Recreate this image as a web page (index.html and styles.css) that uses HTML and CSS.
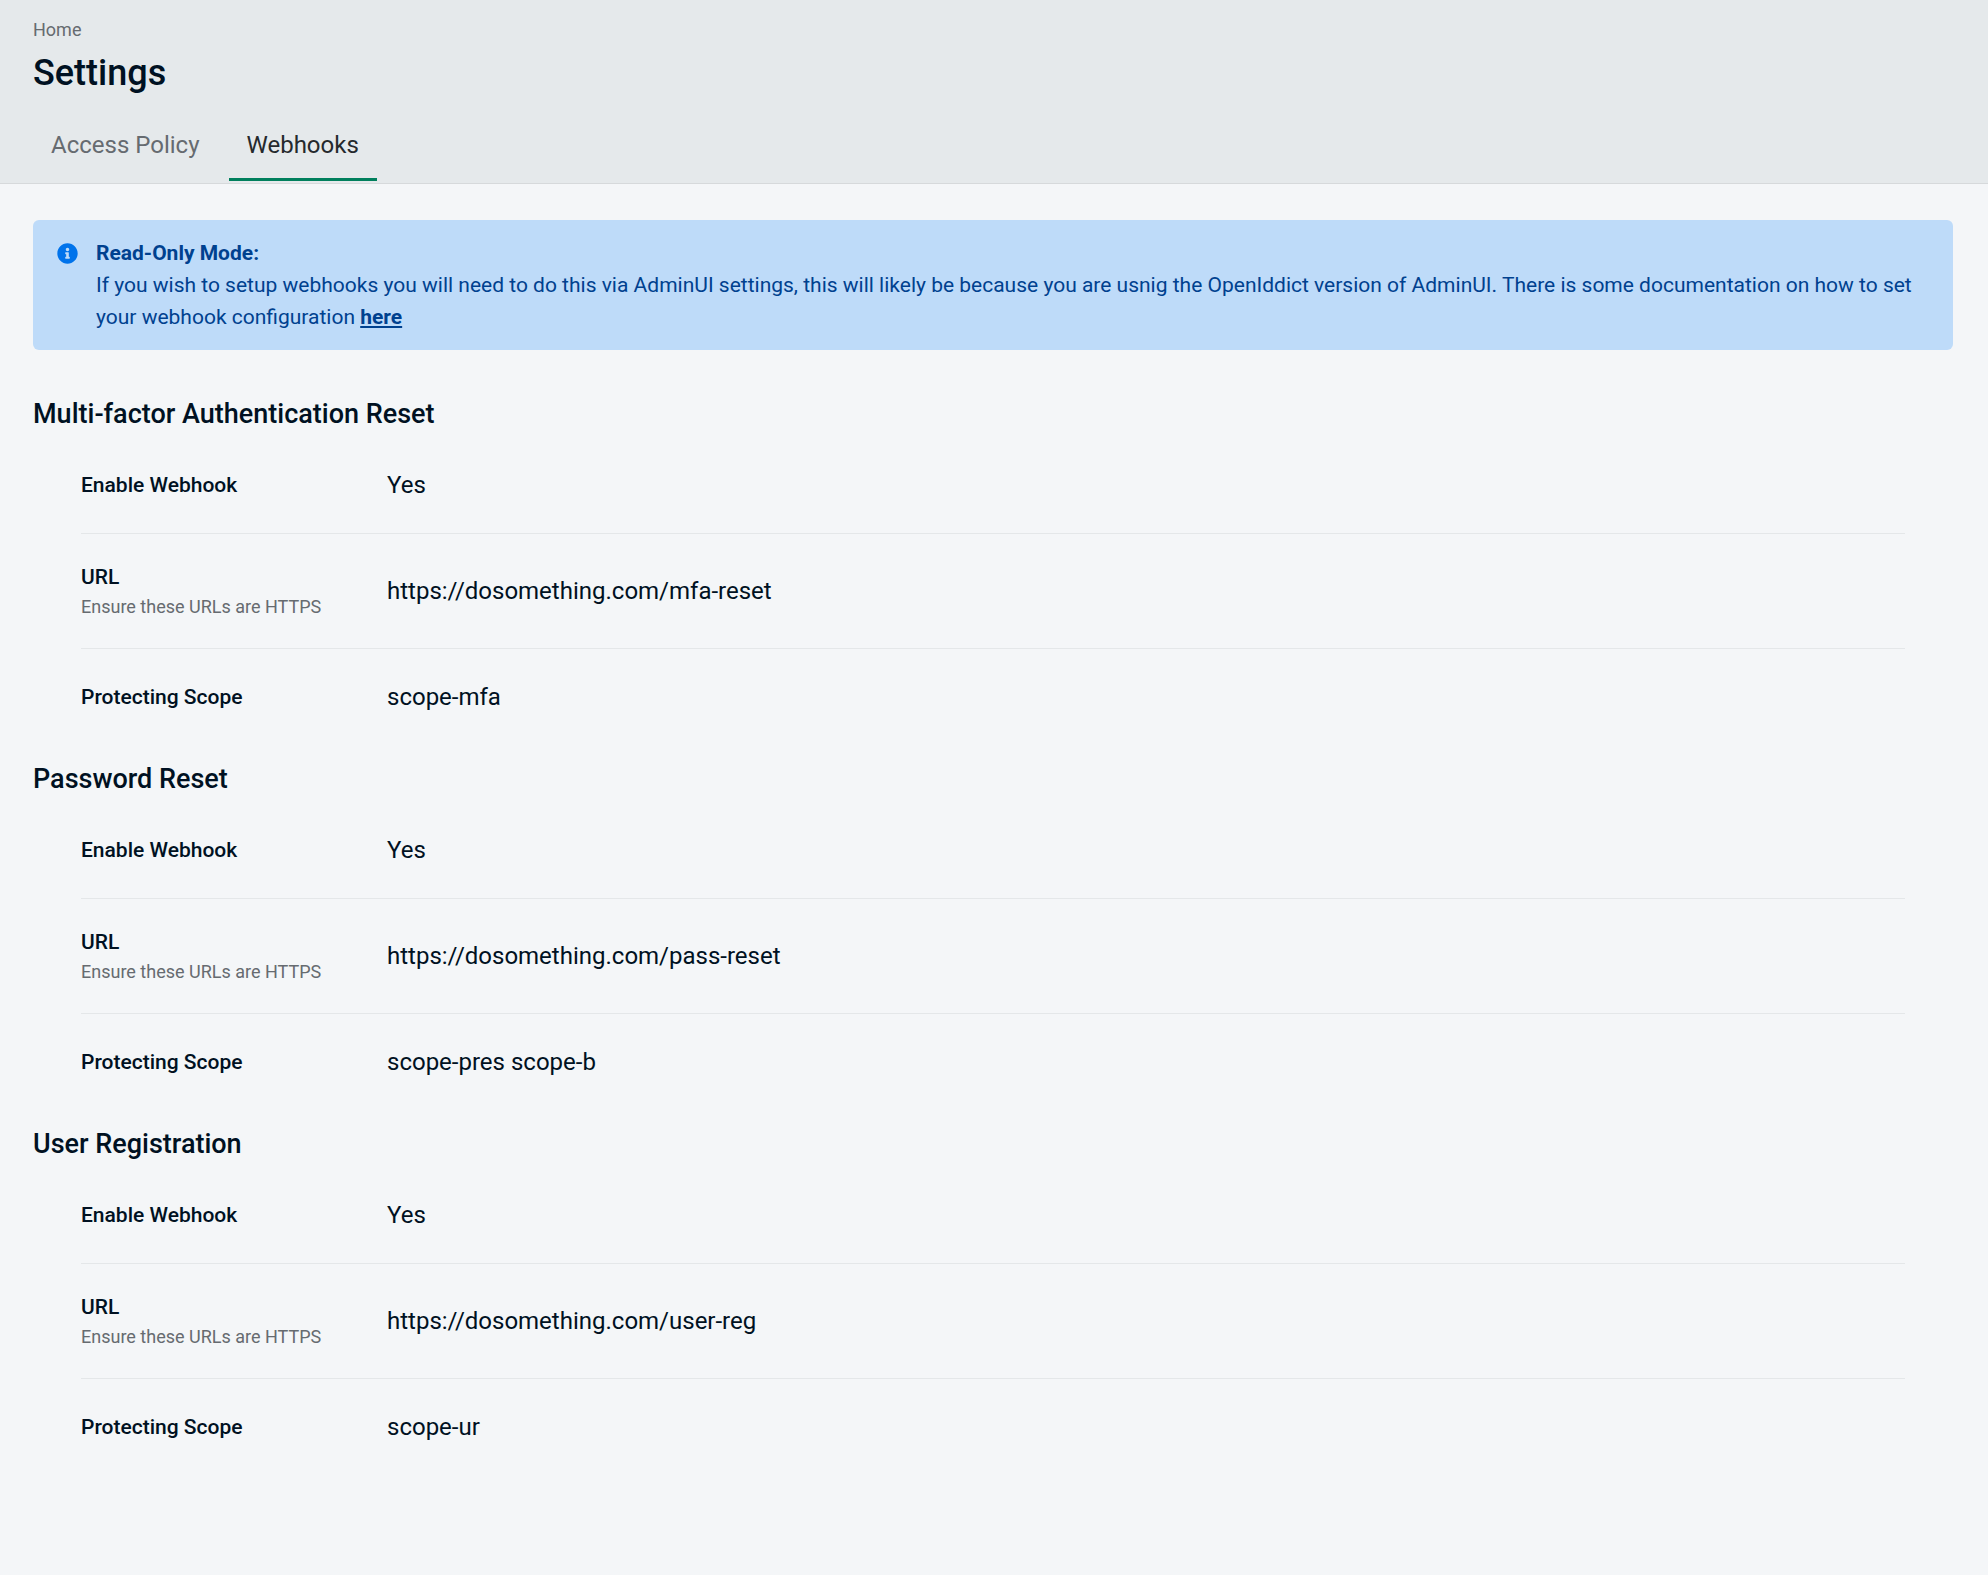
FILE: index.html
```html
<!DOCTYPE html>
<html lang="en">
<head>
<meta charset="utf-8">
<meta name="viewport" content="width=device-width, initial-scale=1">
<title>Settings</title>
<link rel="stylesheet" href="styles.css">
</head>
<body>
<header class="page-header">
  <a class="breadcrumb" href="#">Home</a>
  <h1 class="page-title">Settings</h1>
  <nav class="tabs">
    <a class="tab" href="#">Access Policy</a>
    <a class="tab tab-active" href="#" aria-current="page">Webhooks</a>
  </nav>
</header>
<main class="content">
  <div class="alert" role="note">
    <svg class="alert-icon" viewBox="0 0 512 512" aria-hidden="true"><path fill="currentColor" d="M256 8C119 8 8 119 8 256s111 248 248 248 248-111 248-248S393 8 256 8zm0 110c23 0 42 19 42 42s-19 42-42 42-42-19-42-42 19-42 42-42zm56 254c0 7-5 12-12 12h-88c-7 0-12-5-12-12v-24c0-7 5-12 12-12h12v-64h-12c-7 0-12-5-12-12v-24c0-7 5-12 12-12h64c7 0 12 5 12 12v100h12c7 0 12 5 12 12v24z"/></svg>
    <div class="alert-body">
      <strong class="alert-title">Read-Only Mode:</strong>
      <p class="alert-text">If you wish to setup webhooks you will need to do this via AdminUI settings, this will likely be because you are usnig the OpenIddict version of AdminUI. There is some documentation on how to set your webhook configuration <a class="alert-link" href="#">here</a></p>
    </div>
  </div>

  <section class="group">
    <h2 class="group-title">Multi-factor Authentication Reset</h2>
    <dl class="fields">
      <div class="field"><dt class="label">Enable Webhook</dt><dd class="value">Yes</dd></div>
      <div class="field"><dt class="label">URL<small class="hint">Ensure these URLs are HTTPS</small></dt><dd class="value">https://dosomething.com/mfa-reset</dd></div>
      <div class="field"><dt class="label">Protecting Scope</dt><dd class="value">scope-mfa</dd></div>
    </dl>
  </section>

  <section class="group">
    <h2 class="group-title">Password Reset</h2>
    <dl class="fields">
      <div class="field"><dt class="label">Enable Webhook</dt><dd class="value">Yes</dd></div>
      <div class="field"><dt class="label">URL<small class="hint">Ensure these URLs are HTTPS</small></dt><dd class="value">https://dosomething.com/pass-reset</dd></div>
      <div class="field"><dt class="label">Protecting Scope</dt><dd class="value">scope-pres scope-b</dd></div>
    </dl>
  </section>

  <section class="group">
    <h2 class="group-title">User Registration</h2>
    <dl class="fields">
      <div class="field"><dt class="label">Enable Webhook</dt><dd class="value">Yes</dd></div>
      <div class="field"><dt class="label">URL<small class="hint">Ensure these URLs are HTTPS</small></dt><dd class="value">https://dosomething.com/user-reg</dd></div>
      <div class="field"><dt class="label">Protecting Scope</dt><dd class="value">scope-ur</dd></div>
    </dl>
  </section>
</main>
</body>
</html>
```
FILE: styles.css
```css
* { box-sizing: border-box; }
body {
  margin: 0;
  background: #f4f6f8;
  color: #001122;
  font-family: Roboto, "Liberation Sans", sans-serif;
  font-size: 24px;
  line-height: 32px;
}
h1, h2, p, dl, dd { margin: 0; }
a { color: inherit; text-decoration: none; }

.page-header {
  padding: 18px 35px 2px 33px;
  background: #e5e9eb;
  border-bottom: 1px solid #d6d9db;
}
.breadcrumb {
  display: block;
  font-size: 18px;
  line-height: 24px;
  color: #666b70;
}
.page-title {
  margin-top: 9px;
  font-size: 36px;
  line-height: 44px;
  font-weight: 500;
}
.tabs {
  display: flex;
  gap: 11px;
  margin-top: 25px;
}
.tab {
  padding: 9px 18px 17px;
  border-bottom: 3px solid transparent;
  color: #666b70;
}
.tab-active {
  color: #25292d;
  border-bottom-color: #007f5c;
}

.content { padding: 36px 35px 72px 33px; }
.alert {
  display: flex;
  gap: 18px;
  margin-bottom: 30px;
  padding: 17px 24px;
  border-radius: 6px;
  background: #bedbf9;
  color: #00418f;
  font-size: 21px;
}
.alert-icon {
  flex: none;
  width: 21px;
  height: 21px;
  margin-top: 6px;
  color: #0073eb;
}
.alert-title {
  display: block;
  font-weight: 700;
}
.alert-link {
  font-weight: 700;
  text-decoration: underline;
}

.group-title {
  padding: 18px 0 7px;
  font-size: 27px;
  line-height: 32px;
  font-weight: 500;
}
.fields { padding: 0 48px; }
.field {
  display: grid;
  grid-template-columns: 306px 1fr;
  align-items: center;
  padding: 27px 0;
  border-bottom: 1px solid #e4e7e9;
}
.field:last-child { border-bottom: 0; }
.label {
  padding: 5px 0;
  font-size: 21px;
  line-height: 32px;
  font-weight: 500;
}
.label:has(.hint) { padding: 0; }
.hint {
  display: block;
  font-size: 18px;
  line-height: 28px;
  font-weight: 400;
  color: #666b70;
}
```
